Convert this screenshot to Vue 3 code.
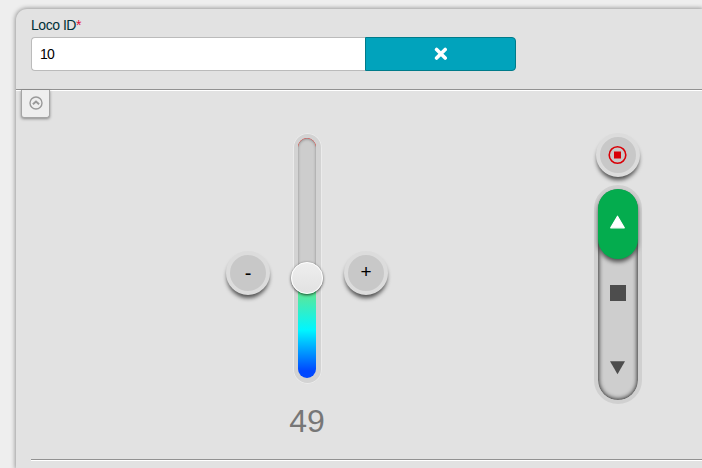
<script setup>
import { ref, computed } from 'vue'

const locoId = ref('10')
const speed = ref(49)
const min = 0
const max = 126
const collapsed = ref(false)

const travel = 240
const knobBottom = computed(() => 84 + ((speed.value - 49) / (max - min)) * 208)
const coverHeight = computed(() => travel - knobBottom.value - 16)

function change(step) {
  speed.value = Math.min(max, Math.max(min, speed.value + step))
}
</script>

<template>
  <main class="panel">
    <header class="head">
      <label class="label" for="loco">Loco ID<span class="required">*</span></label>
      <div class="group">
        <input id="loco" v-model="locoId" class="input" type="text" />
        <button class="release" type="button" @click="locoId = ''">
          <svg width="14" height="14" viewBox="0 0 14 14">
            <path d="M2.6 2.4 L11.2 11 M11.2 2.4 L2.6 11" stroke="#fff" stroke-width="3.6" stroke-linecap="round" />
          </svg>
        </button>
      </div>
    </header>

    <section class="body">
      <button class="tab" type="button" @click="collapsed = !collapsed">
        <svg width="14" height="14" viewBox="0 0 14 14" fill="none" stroke="#999">
          <circle cx="7" cy="7" r="6" stroke-width="1.4" />
          <path d="M3.9 8.3 L7 5.5 L10.1 8.3" stroke-width="1.9" />
        </svg>
      </button>

      <div class="throttle">
        <div class="speed">
          <button class="round" type="button" @click="change(-1)">-</button>
          <div class="slider">
            <div class="track">
              <div class="cover" :style="{ height: coverHeight + 'px' }"></div>
            </div>
            <div class="knob" :style="{ bottom: knobBottom + 'px' }"></div>
          </div>
          <button class="round plus" type="button" @click="change(1)">+</button>
        </div>
        <output class="value">{{ speed }}</output>
      </div>

      <div class="direction">
        <button class="round" type="button">
          <svg width="20" height="20" viewBox="0 0 20 20">
            <circle cx="9.5" cy="10" r="8.3" fill="none" stroke="#d90007" stroke-width="1.6" />
            <rect x="6" y="6.5" width="7" height="7" fill="#d90007" />
          </svg>
        </button>
        <div class="switch">
          <div class="forward">
            <svg width="16" height="14" viewBox="0 0 16 14">
              <path d="M7.5 1.2 L14.3 12.8 H0.7 Z" fill="#fff" stroke="#fff" stroke-width="1.2" stroke-linejoin="round" />
            </svg>
          </div>
          <div class="halt"></div>
          <svg class="reverse" width="16" height="14" viewBox="0 0 16 14">
            <path d="M0 0.2 H15 L7.5 13.2 Z" fill="#4d4d4d" />
          </svg>
        </div>
      </div>
    </section>
    <hr class="rule" />
  </main>
</template>

<style>
html,
body {
  background: #eee;
  overflow: hidden;
}
</style>

<style scoped>
.panel {
  box-sizing: border-box;
  height: 459px;
  margin: 9px 0 0 16px;
  border-radius: 11px 0 0 0;
  background: #e2e2e2;
  box-shadow: 0 0 4px 1px #999;
  font-family: Arial, "Liberation Sans", sans-serif;
  overflow: hidden;
}
button {
  padding: 0;
  border: 0;
  font-family: inherit;
  display: flex;
  align-items: center;
  justify-content: center;
}
svg {
  display: block;
}
.head {
  box-sizing: border-box;
  height: 81px;
  padding: 8px 0 0 15px;
  border-bottom: 1px solid #929292;
  box-shadow: 0 1px #fff;
}
.label {
  display: block;
  height: 20px;
  line-height: 17px;
  font-size: 14px;
  letter-spacing: -0.47px;
  color: #003038;
}
.required {
  color: #e0103a;
}
.group {
  display: flex;
  width: 485px;
  height: 34px;
}
.input {
  box-sizing: border-box;
  width: 334px;
  height: 34px;
  padding: 0 8px;
  border: 1px solid #bbb;
  border-right: 0;
  border-radius: 4px 0 0 4px;
  outline: 0;
  background: #fff;
  color: #000;
  font: 14px Arial, "Liberation Sans", sans-serif;
  letter-spacing: -0.7px;
}
.release {
  box-sizing: border-box;
  width: 151px;
  border: 1px solid #007b8a;
  border-radius: 0 4px 4px 0;
  background: #01a3bc;
}
.body {
  display: grid;
  grid-template-columns: 29px 163px 1fr 48px 60px;
  align-items: start;
  height: 369px;
}
.tab {
  box-sizing: border-box;
  width: 29px;
  height: 28px;
  margin-left: 5px;
  padding-bottom: 1px;
  border: 1px solid #a5a5a5;
  border-top: 0;
  border-radius: 0 0 3px 3px;
  background: #eee;
  box-shadow: 0 1px 3px rgba(0, 0, 0, 0.4);
}
.throttle {
  grid-column: 3;
  width: 198px;
  margin-top: 43px;
}
.speed {
  display: flex;
  align-items: center;
  justify-content: center;
  gap: 23px;
}
.round {
  box-sizing: border-box;
  flex: none;
  width: 44px;
  height: 44px;
  border: 4px solid #dcdcdc;
  border-radius: 50%;
  background: #c8c8c8;
  box-shadow: 0 4px 4px -1px rgba(0, 0, 0, 0.65);
  color: #000;
  font-size: 20px;
  line-height: 36px;
}
.speed .round {
  margin-top: 30px;
}
.plus {
  padding-bottom: 2px;
  font-size: 19px;
}
.slider {
  position: relative;
  box-sizing: border-box;
  width: 29px;
  height: 251px;
  margin: 0 -1px -1px 0;
  padding: 5px 6px 6px 5px;
  border-radius: 15px;
  background: #d3d3d3;
  box-shadow: inset 0 0 0 1px #ebebeb;
}
.track {
  height: 240px;
  border-radius: 9px;
  overflow: hidden;
  background: linear-gradient(to top, #0048ff 3%, #00f6ff 20%, #67e58c 37%, #ffff00 60%, #f00 100%);
}
.cover {
  border-radius: 9px 9px 0 0;
  background: #cdcdcd;
  box-shadow: inset 0 1px 3px rgba(0, 0, 0, 0.35);
}
.knob {
  position: absolute;
  box-sizing: border-box;
  left: -2px;
  width: 32px;
  height: 32px;
  margin-bottom: 6px;
  border: 1px solid #fff;
  border-radius: 50%;
  background: linear-gradient(#eee, #e2e2e2);
  box-shadow: 0 1px 3px rgba(0, 0, 0, 0.7);
}
.value {
  display: block;
  margin-top: 19px;
  font-size: 32px;
  line-height: 38px;
  text-align: center;
  color: #777;
}
.direction {
  grid-column: 4;
  display: flex;
  flex-direction: column;
  align-items: center;
  gap: 8px;
  margin-top: 43px;
}
.switch {
  box-sizing: border-box;
  display: flex;
  flex-direction: column;
  align-items: center;
  width: 48px;
  height: 219px;
  border: 4px solid #d0d0d0;
  border-radius: 24px;
  background: #cecece;
  box-shadow: inset 0 0 4px 1px rgba(0, 0, 0, 0.75);
}
.forward {
  box-sizing: border-box;
  display: flex;
  align-items: center;
  justify-content: center;
  width: 40px;
  height: 70px;
  padding-bottom: 4px;
  border-radius: 20px;
  background: #04ac4e;
  box-shadow: 0 3px 4px rgba(0, 0, 0, 0.6);
}
.halt {
  width: 16px;
  height: 16px;
  margin: 26px 0 60px;
  background: #4d4d4d;
}
.rule {
  margin: 0 0 0 15px;
  border: 0;
  border-top: 1px solid #929292;
  border-bottom: 1px solid #fff;
}
</style>
